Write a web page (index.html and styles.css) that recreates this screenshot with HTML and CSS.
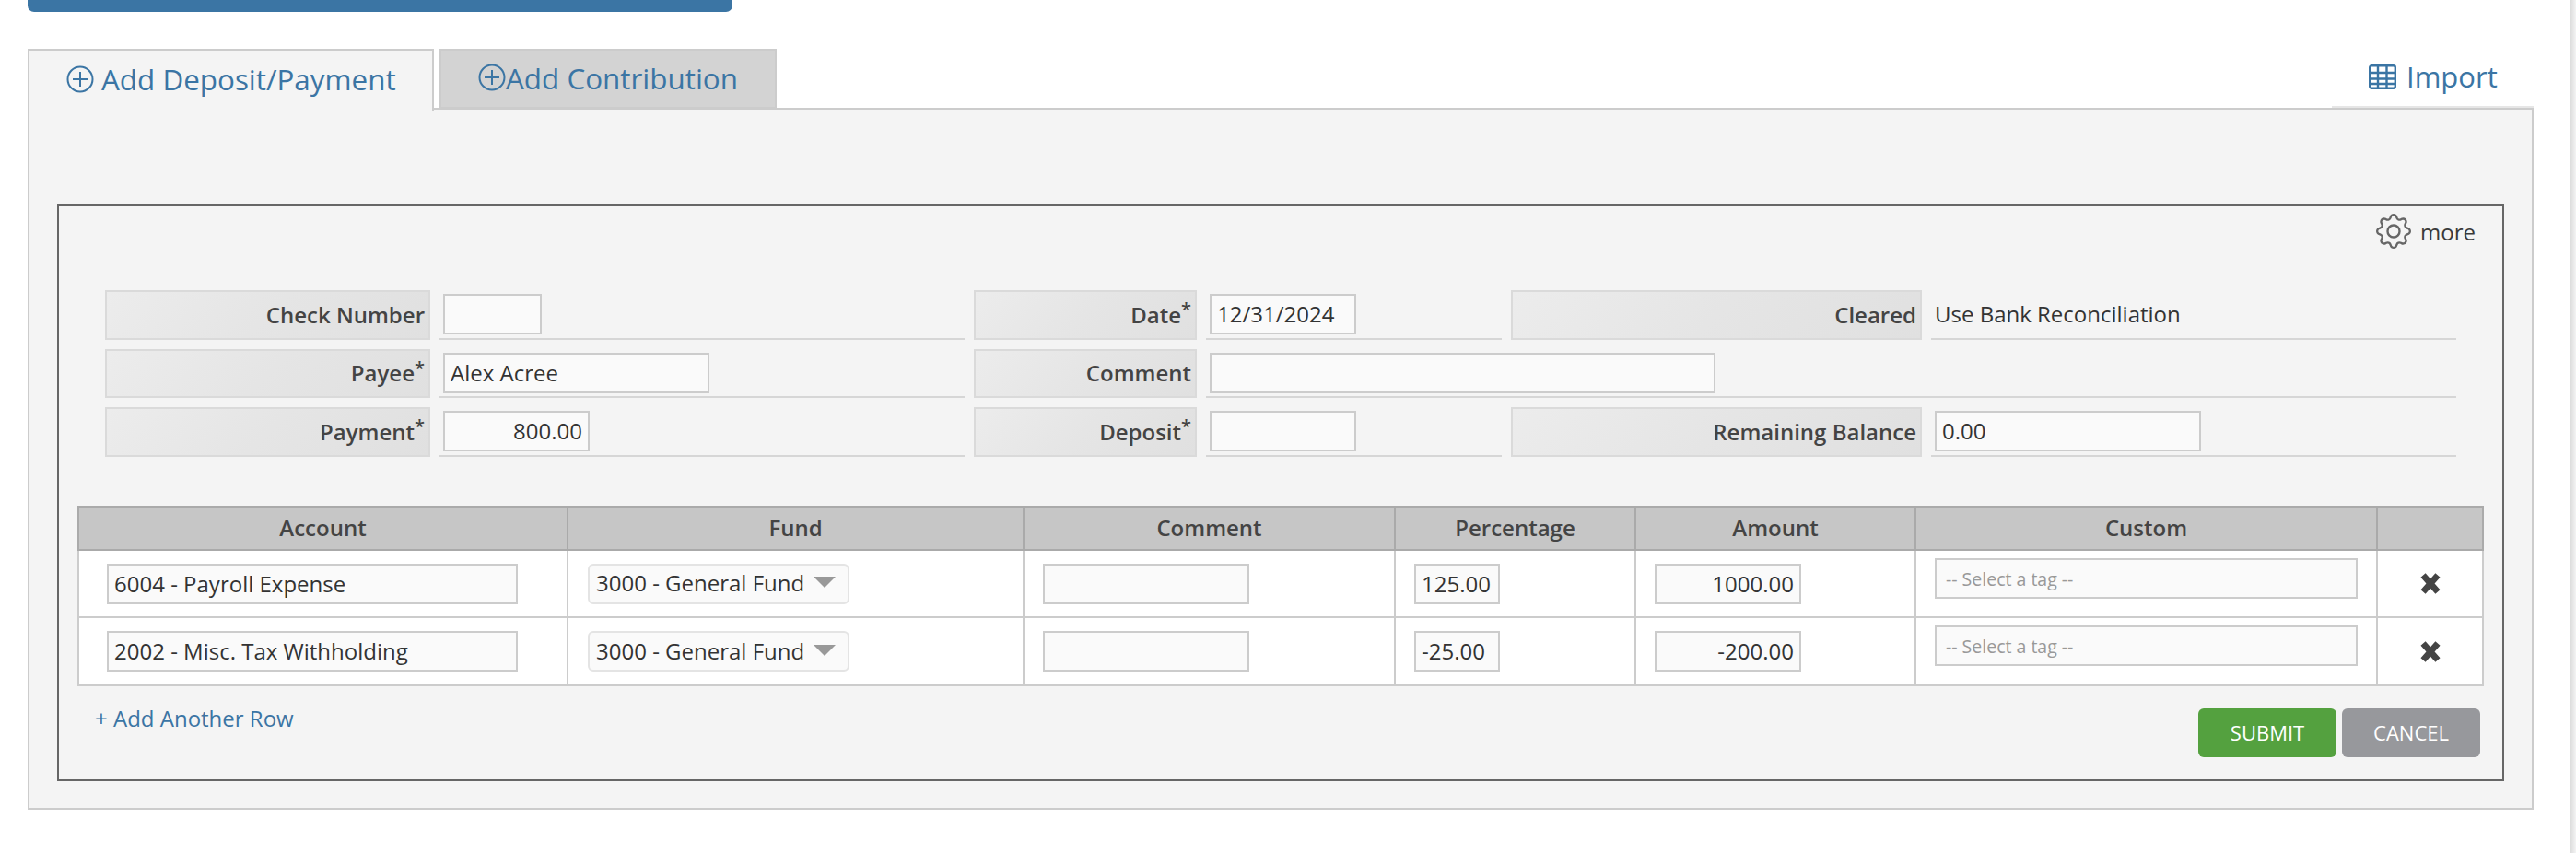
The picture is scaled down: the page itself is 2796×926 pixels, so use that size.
FILE: index.html
```html
<!DOCTYPE html>
<html lang="en">
<head>
<meta charset="utf-8">
<title>Add Deposit/Payment</title>
<link rel="stylesheet" href="styles.css">
</head>
<body>
<div class="page">
  <div class="topbar"></div>
  <div class="tabs">
    <a class="tab tab-active">
      <svg class="plus" viewBox="0 0 30 30"><circle cx="15" cy="15" r="13.5"/><path d="M15 7v16M7 15h16"/></svg>
      <span class="tab-gap">Add Deposit/Payment</span>
    </a>
    <a class="tab tab-idle">
      <svg class="plus" viewBox="0 0 30 30"><circle cx="15" cy="15" r="13.5"/><path d="M15 7v16M7 15h16"/></svg>
      <span>Add Contribution</span>
    </a>
    <a class="import">
      <svg class="table-icon" viewBox="0 0 30 27"><rect x="1.2" y="1.2" width="27.6" height="24.6" rx="2"/><path d="M1 9h28M1 15.500h28M1 21h28M10 1v25M19.500 1v25"/></svg>
      <span>Import</span>
    </a>
  </div>
  <div class="panel">
    <div class="box">
      <div class="more">
        <svg class="gear" viewBox="0 0 16 16"><path d="M8 4.754a3.246 3.246 0 1 0 0 6.492 3.246 3.246 0 0 0 0-6.492zM5.754 8a2.246 2.246 0 1 1 4.492 0 2.246 2.246 0 0 1-4.492 0z"/><path d="M9.796 1.343c-.527-1.79-3.065-1.79-3.592 0l-.094.319a.873.873 0 0 1-1.255.52l-.292-.16c-1.64-.892-3.433.902-2.54 2.541l.159.292a.873.873 0 0 1-.52 1.255l-.319.094c-1.79.527-1.79 3.065 0 3.592l.319.094a.873.873 0 0 1 .52 1.255l-.16.292c-.892 1.64.901 3.434 2.541 2.54l.292-.159a.873.873 0 0 1 1.255.52l.094.319c.527 1.79 3.065 1.79 3.592 0l.094-.319a.873.873 0 0 1 1.255-.52l.292.16c1.64.893 3.434-.902 2.54-2.541l-.159-.292a.873.873 0 0 1 .52-1.255l.319-.094c1.79-.527 1.79-3.065 0-3.592l-.319-.094a.873.873 0 0 1-.52-1.255l.16-.292c.893-1.64-.902-3.433-2.541-2.54l-.292.159a.873.873 0 0 1-1.255-.52l-.094-.319zm-2.633.283c.246-.835 1.428-.835 1.674 0l.094.319a1.873 1.873 0 0 0 2.693 1.115l.291-.16c.764-.415 1.6.42 1.184 1.185l-.159.292a1.873 1.873 0 0 0 1.116 2.692l.318.094c.835.246.835 1.428 0 1.674l-.319.094a1.873 1.873 0 0 0-1.115 2.693l.16.291c.415.764-.42 1.6-1.185 1.184l-.291-.159a1.873 1.873 0 0 0-2.693 1.116l-.094.318c-.246.835-1.428.835-1.674 0l-.094-.319a1.873 1.873 0 0 0-2.692-1.115l-.292.16c-.764.415-1.6-.42-1.184-1.185l.159-.291A1.873 1.873 0 0 0 1.945 8.93l-.319-.094c-.835-.246-.835-1.428 0-1.674l.319-.094A1.873 1.873 0 0 0 3.06 4.377l-.16-.292c-.415-.764.42-1.6 1.185-1.184l.292.159a1.873 1.873 0 0 0 2.692-1.115l.094-.319z"/></svg>
        <span>more</span>
      </div>
      <div class="fields">
        <div class="label">Check Number</div>
        <div class="value"><div class="input w-check"></div></div>
        <div class="label">Date<sup>*</sup></div>
        <div class="value"><div class="input w-date">12/31/2024</div></div>
        <div class="label">Cleared</div>
        <div class="value value-text">Use Bank Reconciliation</div>

        <div class="label">Payee<sup>*</sup></div>
        <div class="value"><div class="input w-payee">Alex Acree</div></div>
        <div class="label">Comment</div>
        <div class="value span3"><div class="input w-comment"></div></div>

        <div class="label">Payment<sup>*</sup></div>
        <div class="value"><div class="input w-money right">800.00</div></div>
        <div class="label">Deposit<sup>*</sup></div>
        <div class="value"><div class="input w-date"></div></div>
        <div class="label">Remaining Balance</div>
        <div class="value"><div class="input w-balance">0.00</div></div>
      </div>
      <table class="lines">
        <colgroup>
          <col class="c-account"><col class="c-fund"><col class="c-comment"><col class="c-pct"><col class="c-amount"><col class="c-custom"><col class="c-x">
        </colgroup>
        <thead>
          <tr><th>Account</th><th>Fund</th><th>Comment</th><th>Percentage</th><th>Amount</th><th>Custom</th><th></th></tr>
        </thead>
        <tbody>
          <tr>
            <td><div class="input cell-account">6004 - Payroll Expense</div></td>
            <td><div class="select">3000 - General Fund<i class="arrow"></i></div></td>
            <td><div class="input cell-comment"></div></td>
            <td><div class="input cell-pct">125.00</div></td>
            <td><div class="input cell-amount right">1000.00</div></td>
            <td class="td-tag"><div class="input cell-tag">-- Select a tag --</div></td>
            <td class="td-x"><svg class="x" viewBox="0 0 22 22"><path d="M4 3l14 16M18 3L4 19"/></svg></td>
          </tr>
          <tr>
            <td><div class="input cell-account">2002 - Misc. Tax Withholding</div></td>
            <td><div class="select">3000 - General Fund<i class="arrow"></i></div></td>
            <td><div class="input cell-comment"></div></td>
            <td><div class="input cell-pct">-25.00</div></td>
            <td><div class="input cell-amount right">-200.00</div></td>
            <td class="td-tag"><div class="input cell-tag">-- Select a tag --</div></td>
            <td class="td-x"><svg class="x" viewBox="0 0 22 22"><path d="M4 3l14 16M18 3L4 19"/></svg></td>
          </tr>
        </tbody>
      </table>
      <div class="footer">
        <a class="add-row">+ Add Another Row</a>
        <div class="buttons">
          <a class="btn btn-submit">SUBMIT</a>
          <a class="btn btn-cancel">CANCEL</a>
        </div>
      </div>
    </div>
  </div>
</div>
</body>
</html>
```
FILE: styles.css
```css
* { box-sizing: border-box; }
html {
  margin: 0; padding: 0;
  background: #fff linear-gradient(to right, #dcdcdc, #f4f4f4) right top / 6px 100% no-repeat;
}
body {
  margin: 0; padding: 0;
  width: 2790px;
  height: 926px;
  overflow: hidden;
  font-family: "Open Sans", "Noto Sans", sans-serif;
  color: #333;
}
.page { width: 2720px; margin-left: 30px; }
.topbar { width: 765px; height: 13px; background: #3b75a4; border-radius: 0 0 7px 7px; }

.tabs { display: flex; height: 104px; padding-top: 40px; align-items: flex-start; position: relative; }
.tab {
  display: flex; align-items: center; height: 66px;
  font-size: 31.400px; color: #3b75a4;
  border: 2px solid #ccc;
  padding-bottom: 3px;
}
.tab-active { width: 441px; padding-left: 40px; background: #f4f4f4; border-bottom: 0; height: 67px; position: relative; z-index: 1; }
.tab-idle { width: 366px; margin-left: 6px; padding-left: 40px; background: #d3d3d3; height: 65px; }
.tab-gap { margin: 0 0 2px 8px; }
.plus { width: 30px; height: 30px; fill: none; stroke: #3b75a4; stroke-width: 2; flex: none; }
.import {
  margin-left: auto; width: 219px; height: 64px;
  display: flex; align-items: center; padding-left: 40px; padding-bottom: 2px;
  font-size: 31px; color: #3b75a4;
  border-bottom: 2px solid #e6e6e6;
}
.import span { margin-left: 11px; }
.table-icon { width: 30px; height: 27px; fill: none; stroke: #3b75a4; stroke-width: 2.400; flex: none; }

.panel {
  height: 762px;
  background: #f4f4f4;
  border: 2px solid #ccc;
  padding: 103px 30px 0;
}
.box {
  height: 626px;
  border: 2px solid #666;
  padding: 0 20px 0 21px;
  position: relative;
}
.more {
  display: flex; justify-content: flex-end; align-items: center;
  height: 50px; margin-top: 2px; padding-right: 9px;
  font-size: 24px; color: #3a3a3a;
}
.gear { width: 38px; height: 38px; fill: #666; margin-right: 10px; }

.fields {
  display: grid;
  grid-template-columns: 353px 570px 242px 321px 446px 570px;
  grid-template-rows: 54px 53px 54px;
  gap: 10px;
  margin: 39px 0 0 29px;
  width: 2552px;
}
.label {
  display: flex; align-items: center; justify-content: flex-end;
  padding: 0 4px 2px 0;
  font-size: 24px; font-weight: 600; color: #444;
  background: linear-gradient(135deg, #ececec 0%, #e5e5e5 50%, #e0e0e0 100%);
  border: 2px solid #dadada;
}
.label sup { font-size: 20px; font-weight: 600; line-height: 0; position: relative; top: -5px; vertical-align: super; }
.value {
  border-bottom: 2px solid #d6d6d6;
  padding: 4px 0 0 4px;
}
.value-text { font-size: 24px; display: flex; align-items: center; padding: 0 0 2px 4px; }
.span3 { grid-column: span 3; }

.input {
  height: 44px;
  background: #fafafa;
  border: 2px solid #ccc;
  font-size: 24px; line-height: 40px;
  padding: 0 6px;
  color: #333;
  white-space: nowrap;
  overflow: hidden;
}
.right { text-align: right; }
.w-check { width: 107px; }
.w-date { width: 159px; }
.w-payee { width: 289px; }
.w-money { width: 159px; }
.w-comment { width: 549px; }
.w-balance { width: 289px; }

.lines {
  table-layout: fixed;
  border-collapse: collapse;
  width: 2610px;
  margin: 53px 0 0 -1px;
  background: #fff;
}
.c-account { width: 531px; } .c-fund { width: 495px; } .c-comment { width: 403px; } .c-pct { width: 261px; }
.c-amount { width: 304px; } .c-custom { width: 501px; } .c-x { width: 115px; }
.lines th {
  height: 47px; padding: 0 0 2px;
  background: #c6c6c6;
  border: 2px solid #aaa;
  font-size: 24px; font-weight: 600; color: #444;
}
.lines td {
  height: 73px; padding: 0 20px;
  border: 2px solid #ccc;
  vertical-align: middle;
}
.lines tr:last-child td { height: 74px; }
.cell-account { width: 446px; margin-left: 10px; }
.cell-comment { width: 224px; }
.cell-pct { width: 93px; }
.cell-amount { width: 159px; }
.td-tag .cell-tag {
  width: 459px; height: 44px; margin-top: -12px; padding-left: 10px;
  font-size: 19.500px; color: #999; line-height: 41px;
}
.select {
  width: 284px; height: 44px; margin-left: 1px;
  display: flex; align-items: center; justify-content: space-between;
  background: #fafafa;
  border: 2px solid #e4e4e4;
  border-radius: 6px;
  padding: 0 13px 2px 7px;
  font-size: 24px; color: #333; white-space: nowrap;
}
.arrow { width: 0; height: 0; border-left: 12px solid transparent; border-right: 12px solid transparent; border-top: 12px solid #999; margin-top: -1px; }
.td-x { text-align: center; }
.x { width: 26px; height: 25px; fill: none; stroke: #444; stroke-width: 6; display: block; margin: 0 auto; filter: blur(0.5px); }

.footer { display: flex; justify-content: space-between; align-items: flex-start; }
.add-row { font-size: 24px; color: #3b75a4; margin: 18px 0 0 18px; }
.buttons { display: flex; gap: 6px; margin: 24px 4px 0 0; }
.btn {
  width: 150px; height: 53px;
  display: flex; align-items: center; justify-content: center;
  font-size: 22px; color: #fff; border-radius: 6px;
  padding-bottom: 1px;
}
.btn-submit { background: #54a13f; }
.btn-cancel { background: #97989c; }
```
